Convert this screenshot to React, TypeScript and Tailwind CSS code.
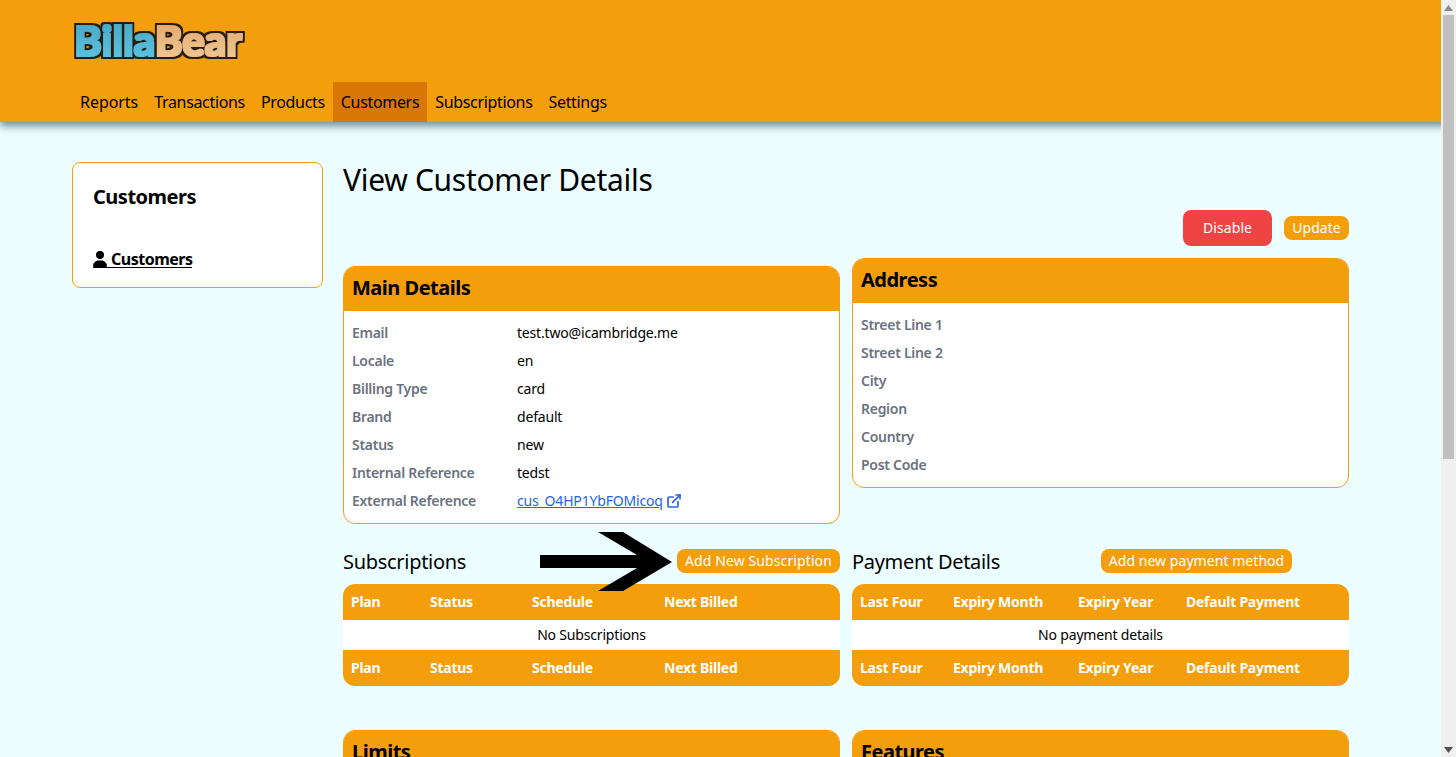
import { ExternalLink } from "lucide-react";
import { FaUser } from "react-icons/fa6";

const navItems = ["Reports", "Transactions", "Products", "Customers", "Subscriptions", "Settings"];

const mainDetails = [
  ["Email", "test.two@icambridge.me"],
  ["Locale", "en"],
  ["Billing Type", "card"],
  ["Brand", "default"],
  ["Status", "new"],
  ["Internal Reference", "tedst"],
];

const addressRows = ["Street Line 1", "Street Line 2", "City", "Region", "Country", "Post Code"];

const Logo = () => (
  <svg width="178" height="52" viewBox="0 0 178 52" className="block">
    <defs>
      <linearGradient id="blue" x1="0" y1="0" x2="0" y2="1">
        <stop offset="0" stopColor="#45a3c2" />
        <stop offset="1" stopColor="#5fc6e2" />
      </linearGradient>
      <linearGradient id="tan" x1="0" y1="0" x2="0" y2="1">
        <stop offset="0" stopColor="#dfa268" />
        <stop offset="1" stopColor="#f2cd98" />
      </linearGradient>
      <filter id="chunky" filterUnits="userSpaceOnUse" x="0" y="0" width="178" height="52">
        <feMorphology in="SourceGraphic" operator="dilate" radius="0.6" result="fat" />
        <feMorphology in="fat" operator="dilate" radius="1.8" result="outline" />
        <feFlood floodColor="#2a1c10" />
        <feComposite in2="outline" operator="in" result="edge" />
        <feMerge>
          <feMergeNode in="edge" />
          <feMergeNode in="fat" />
        </feMerge>
      </filter>
    </defs>
    <text
      x="4"
      y="36"
      fontFamily="Lato, sans-serif"
      fontWeight="900"
      fontSize="41"
      textLength="168"
      lengthAdjust="spacingAndGlyphs"
      filter="url(#chunky)"
    >
      <tspan fill="url(#blue)">Billa</tspan>
      <tspan fill="url(#tan)">Bear</tspan>
    </text>
  </svg>
);

const DataTable = ({ columns, widths, empty }: { columns: string[]; widths: string[]; empty: string }) => (
  <table className="w-full table-fixed text-sm border-separate border-spacing-0">
    <colgroup>
      {widths.map((w, i) => (
        <col key={i} style={{ width: w }} />
      ))}
    </colgroup>
    <thead>
      <tr className="h-9 bg-[#f59e0b] text-white text-left">
        {columns.map((c, i) => (
          <th key={c} className={`px-2 font-bold tracking-[-0.25px] ${i === 0 ? "rounded-tl-xl" : ""} ${i === columns.length - 1 ? "rounded-tr-xl" : ""}`}>
            {c}
          </th>
        ))}
      </tr>
    </thead>
    <tbody>
      <tr className="h-[30px] bg-white">
        <td colSpan={columns.length} className="text-center text-black tracking-[-0.18px]">
          {empty}
        </td>
      </tr>
    </tbody>
    <tfoot>
      <tr className="h-9 bg-[#f59e0b] text-white text-left">
        {columns.map((c, i) => (
          <th key={c} className={`px-2 font-bold tracking-[-0.25px] ${i === 0 ? "rounded-bl-xl" : ""} ${i === columns.length - 1 ? "rounded-br-xl" : ""}`}>
            {c}
          </th>
        ))}
      </tr>
    </tfoot>
  </table>
);

const App = () => {
  return (
    <div className="min-h-[1232px] bg-[#ecfeff] text-black font-['Noto_Sans',sans-serif]">
      {/* Header */}
      <header className="h-[122px] bg-[#f59e0b] shadow-[0_4px_8px_rgba(60,70,70,0.65)] relative">
        <div className="pl-[70px] pt-[20px] h-[82px]">
          <Logo />
        </div>
        <nav className="flex pl-[72px] h-10">
          {navItems.map((item) => (
            <a
              key={item}
              className={`px-2 flex items-center text-base ${item === "Reports" ? "tracking-[-0.05px]" : "tracking-[-0.33px]"} ${item === "Customers" ? "bg-[#d97706]" : ""}`}
            >
              {item}
            </a>
          ))}
        </nav>
      </header>

      <div className="flex items-start gap-5 pl-[72px] pr-[107px] pt-10">
        {/* Sidebar */}
        <aside className="w-[251px] h-[126px] shrink-0 bg-white border border-[#f59e0b] rounded-lg px-5 pt-5">
          <h2 className="text-xl tracking-[-0.5px] font-bold mb-[38px] leading-7">Customers</h2>
          <a className="inline-flex items-center gap-1 h-[16px] font-bold text-base leading-[15px] tracking-[-0.5px] border-b-[1.5px] border-black">
            <FaUser className="w-[14px] h-[16px]" />
            Customers
          </a>
        </aside>

        {/* Main */}
        <main className="flex-1">
          <h1 className="text-3xl tracking-[-0.3px] leading-9 h-9">View Customer Details</h1>
          <div className="flex justify-end items-center gap-3 mt-[12px] h-9">
            <button className="w-[89px] h-9 rounded-lg bg-[#ef4444] text-white text-sm tracking-[0.1px]">Disable</button>
            <button className="w-[65px] h-6 rounded-lg bg-[#f59e0b] text-white text-sm">Update</button>
          </div>

          <div className="grid grid-cols-2 gap-x-3 mt-3 items-start">
            <section className="mt-2 bg-white border border-[#f59e0b] rounded-xl overflow-hidden">
              <h2 className="h-[45px] -mt-px pb-[2px] bg-[#f59e0b] flex items-center px-2 text-xl tracking-[-0.5px] font-bold">Main Details</h2>
              <dl className="py-2 text-sm">
                {mainDetails.map(([label, value]) => (
                  <div key={label} className="flex h-7 items-center px-2">
                    <dt className="w-[165px] font-semibold text-[#6b7280] tracking-[-0.28px]">{label}</dt>
                    <dd className="tracking-[-0.18px]">{value}</dd>
                  </div>
                ))}
                <div className="flex h-7 items-center px-2">
                  <dt className="w-[165px] font-semibold text-[#6b7280] tracking-[-0.28px]">External Reference</dt>
                  <dd className="flex items-center gap-[3px] text-[#2563eb] tracking-[-0.18px]">
                    <a className="underline">cus_O4HP1YbFOMicoq</a>
                    <ExternalLink className="w-4 h-4" strokeWidth={2.5} />
                  </dd>
                </div>
              </dl>
            </section>

            <section className="bg-white border border-[#f59e0b] rounded-xl overflow-hidden">
              <h2 className="h-[45px] -mt-px pb-[2px] bg-[#f59e0b] flex items-center px-2 text-xl tracking-[-0.5px] font-bold">Address</h2>
              <dl className="py-2 text-sm">
                {addressRows.map((label) => (
                  <div key={label} className="flex h-7 items-center px-2">
                    <dt className="font-semibold text-[#6b7280] tracking-[-0.28px]">{label}</dt>
                  </div>
                ))}
              </dl>
            </section>
          </div>

          <div className="grid grid-cols-2 gap-x-3 mt-[25px]">
            <section className="relative">
              <div className="flex items-center justify-between h-6 mb-[11px]">
                <h3 className="text-xl tracking-[-0.3px] pt-[2px]">Subscriptions</h3>
                <button className="w-[163px] h-6 rounded-lg bg-[#f59e0b] text-white text-sm tracking-[0.1px]">Add New Subscription</button>
              </div>
              <DataTable
                columns={["Plan", "Status", "Schedule", "Next Billed"]}
                widths={["79px", "102px", "132px", "184px"]}
                empty="No Subscriptions"
              />
              {/* Annotation arrow */}
              <svg width="134" height="60" viewBox="0 0 134 60" className="absolute left-[197px] -top-[17px]">
                <polygon points="0,23 97,23 58,0 83,0 132,30 83,59 58,59 97,36 0,36" fill="#000" />
              </svg>
            </section>

            <section>
              <div className="flex items-center h-6 mb-[11px]">
                <h3 className="text-xl tracking-[-0.3px] w-[249px] pt-[2px]">Payment Details</h3>
                <button className="w-[191px] h-6 rounded-lg bg-[#f59e0b] text-white text-sm tracking-[0.05px]">Add new payment method</button>
              </div>
              <DataTable
                columns={["Last Four", "Expiry Month", "Expiry Year", "Default Payment"]}
                widths={["93px", "125px", "108px", "171px"]}
                empty="No payment details"
              />
            </section>
          </div>

          <div className="grid grid-cols-2 gap-x-3 mt-11">
            <section className="bg-white border border-[#f59e0b] rounded-xl overflow-hidden h-[200px]">
              <h2 className="h-[45px] -mt-px pb-[2px] bg-[#f59e0b] flex items-center px-2 text-xl tracking-[-0.5px] font-bold">Limits</h2>
            </section>
            <section className="bg-white border border-[#f59e0b] rounded-xl overflow-hidden h-[200px]">
              <h2 className="h-[45px] -mt-px pb-[2px] bg-[#f59e0b] flex items-center px-2 text-xl tracking-[-0.5px] font-bold">Features</h2>
            </section>
          </div>
        </main>
      </div>

      {/* Browser scrollbar */}
      <div className="fixed top-0 right-0 w-[15px] h-screen bg-[#f0f0f0] flex flex-col items-center">
        <div className="h-[15px] flex items-center justify-center text-[#8a8a8a]">
          <svg width="9" height="6" viewBox="0 0 9 6">
            <polygon points="4.5,0 9,6 0,6" fill="currentColor" />
          </svg>
        </div>
        <div className="w-[11px] h-[444px] bg-[#c0c0c0]" />
        <div className="mt-auto h-[15px] flex items-center justify-center text-[#505050]">
          <svg width="9" height="6" viewBox="0 0 9 6">
            <polygon points="0,0 9,0 4.5,6" fill="currentColor" />
          </svg>
        </div>
      </div>
    </div>
  );
};

export default App;
